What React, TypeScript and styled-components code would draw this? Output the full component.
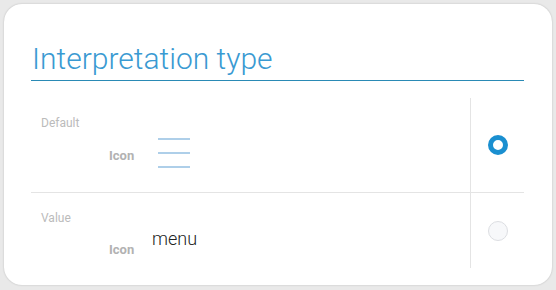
import React from "react";
import styled, { createGlobalStyle } from "styled-components";

const Global = createGlobalStyle`
  html, body { margin: 0; padding: 0; background: #e9e9e9; }
  body { font-family: Roboto, "Noto Sans", Arial, sans-serif; }
  * { box-sizing: border-box; }
`;

const Page = styled.div`
  padding: 4px;
  width: 556px;
  height: 290px;
`;

const Card = styled.div`
  width: 548px;
  height: 281px;
  background: #ffffff;
  border-radius: 18px;
  box-shadow: 0 0 2px rgba(0, 0, 0, 0.22);
  padding: 37px 28px 17px 27px;
`;

const Title = styled.h1`
  margin: 0;
  font-family: Roboto, sans-serif;
  font-weight: 300;
  font-size: 30px;
  line-height: 35px;
  color: #3a9ad2;
  padding: 0 0 4px 1px;
  border-bottom: 1px solid #2a8ab5;
`;

const List = styled.div`
  margin-top: 17px;
`;

const Row = styled.div<{ $last?: boolean }>`
  display: grid;
  grid-template-columns: 439px 1px 53px;
  border-bottom: ${(p) => (p.$last ? "none" : "1px solid #e4e4e4")};
`;

const Content = styled.div<{ $pt: number; $pb: number }>`
  padding: ${(p) => p.$pt}px 0 ${(p) => p.$pb}px 10px;
`;

const Divider = styled.div`
  background: #e4e4e4;
`;

const RadioCell = styled.div`
  display: flex;
  align-items: center;
  justify-content: center;
  padding-left: 1px;
`;

const Label = styled.div`
  font-size: 12px;
  line-height: 14px;
  color: #bbbbbb;
`;

const Field = styled.div<{ $mt: number }>`
  display: flex;
  align-items: flex-start;
  padding-left: 68px;
  margin-top: ${(p) => p.$mt}px;
`;

const FieldLabel = styled.div<{ $mt: number }>`
  width: 42px;
  font-size: 13px;
  line-height: 15px;
  font-weight: 700;
  color: #b2b2b2;
  margin-top: ${(p) => p.$mt}px;
`;

const ValueText = styled.div`
  font-size: 18px;
  line-height: 21px;
  font-weight: 300;
  color: #222222;
  margin-left: 1px;
`;

const MenuGlyph = styled.svg`
  display: block;
  margin-left: 7px;
`;

const Radio = styled.span<{ $checked?: boolean }>`
  display: block;
  width: 20px;
  height: 20px;
  border-radius: 50%;
  background: ${(p) => (p.$checked ? "#ffffff" : "#f7f8fa")};
  border: ${(p) => (p.$checked ? "5px solid #1a8fd0" : "1px solid #dcdee2")};
`;

export default function App() {
  return (
    <>
      <Global />
      <Page>
        <Card>
          <Title>Interpretation type</Title>
          <List>
            <Row>
              <Content $pt={18} $pb={24}>
                <Label>Default</Label>
                <Field $mt={8}>
                  <FieldLabel $mt={10}>Icon</FieldLabel>
                  <MenuGlyph width="32" height="30" viewBox="0 0 32 30">
                    <line x1="0" y1="1" x2="32" y2="1" stroke="#93bfe2" strokeWidth="1.5" />
                    <line x1="0" y1="15" x2="32" y2="15" stroke="#93bfe2" strokeWidth="1.5" />
                    <line x1="0" y1="29" x2="32" y2="29" stroke="#93bfe2" strokeWidth="1.5" />
                  </MenuGlyph>
                </Field>
              </Content>
              <Divider />
              <RadioCell>
                <Radio $checked />
              </RadioCell>
            </Row>
            <Row $last>
              <Content $pt={18} $pb={11}>
                <Label>Value</Label>
                <Field $mt={3}>
                  <FieldLabel $mt={14}>Icon</FieldLabel>
                  <ValueText>menu</ValueText>
                </Field>
              </Content>
              <Divider />
              <RadioCell>
                <Radio />
              </RadioCell>
            </Row>
          </List>
        </Card>
      </Page>
    </>
  );
}
